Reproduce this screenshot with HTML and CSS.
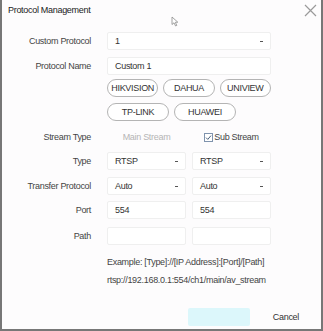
FILE: index.html
```html
<!DOCTYPE html>
<html lang="en">
<head>
    <meta charset="utf-8" />
    <link rel="stylesheet" href="styles.css">
    <title>Protocol Management</title>
</head>
<body>
    <div class="dialog">
        <div class="header">
            <span class="title">Protocol Management</span>
            <svg class="closebut" width="13" height="13" viewBox="0 0 13 13">
                <path d="M1 1 L12 12 M12 1 L1 12" stroke="#9a9a9a" stroke-width="1.2" fill="none" />
            </svg>
        </div>
        <svg class="pointer" width="8" height="11" viewBox="0 0 8 11">
            <path d="M1 1 L1 8.5 L3 6.8 L4.6 10 L5.8 9.4 L4.3 6.3 L6.8 6.2 Z" fill="#fff" stroke="#8a8a8a" stroke-width="0.8" />
        </svg>

        <div class="form">
            <div class="row r1">
                <span class="lbl">Custom Protocol</span>
                <div class="ctrl sel wide">1</div>
            </div>
            <div class="row r2">
                <span class="lbl">Protocol Name</span>
                <div class="ctrl wide">Custom 1</div>
            </div>
            <div class="row r3">
                <span class="lbl"></span>
                <div class="pills">
                    <button class="pill">HIKVISION</button>
                    <button class="pill">DAHUA</button>
                    <button class="pill">UNIVIEW</button>
                </div>
            </div>
            <div class="row r4">
                <span class="lbl"></span>
                <div class="pills">
                    <button class="pill">TP-LINK</button>
                    <button class="pill">HUAWEI</button>
                </div>
            </div>
            <div class="row r5 short">
                <span class="lbl">Stream Type</span>
                <div class="pair">
                    <span class="stream off">Main Stream</span>
                    <span class="stream">
                        <svg class="check" width="9" height="9" viewBox="0 0 9 9">
                            <rect x="0.5" y="0.5" width="8" height="8" fill="#fff" stroke="#7f93ad" />
                            <path d="M2 4.6 L3.8 6.4 L7 2.6" stroke="#4a5f7a" stroke-width="1" fill="none" />
                        </svg>Sub Stream
                    </span>
                </div>
            </div>
            <div class="row r6">
                <span class="lbl">Type</span>
                <div class="pair">
                    <div class="ctrl sel">RTSP</div>
                    <div class="ctrl sel">RTSP</div>
                </div>
            </div>
            <div class="row r7">
                <span class="lbl">Transfer Protocol</span>
                <div class="pair">
                    <div class="ctrl sel">Auto</div>
                    <div class="ctrl sel">Auto</div>
                </div>
            </div>
            <div class="row r8">
                <span class="lbl">Port</span>
                <div class="pair">
                    <div class="ctrl">554</div>
                    <div class="ctrl">554</div>
                </div>
            </div>
            <div class="row r9">
                <span class="lbl">Path</span>
                <div class="pair">
                    <div class="ctrl"></div>
                    <div class="ctrl"></div>
                </div>
            </div>
            <div class="row r10 short">
                <span class="lbl"></span>
                <span class="note">Example: [Type]://[IP Address]:[Port]/[Path]</span>
            </div>
            <div class="row r11 short">
                <span class="lbl"></span>
                <span class="note">rtsp://192.168.0.1:554/ch1/main/av_stream</span>
            </div>
        </div>

        <div class="footer">
            <button class="okbut">OK</button>
            <button class="cancelbut">Cancel</button>
        </div>
    </div>
</body>
</html>
```

FILE: styles.css
```css
body {
    margin: 0;
    font-family: "Liberation Sans", Arial, sans-serif;
    font-size: 9px;
    letter-spacing: -0.3px;
    color: #333;
}
.dialog {
    position: relative;
    width: 323px;
    height: 331px;
    box-sizing: border-box;
    background-color: #fdfcfd;
    border-left: 2px solid #777;
    border-right: 2px solid #777;
    border-bottom: 2px solid #777;
}
.header {
    display: flex;
    justify-content: space-between;
    align-items: center;
    height: 20px;
    padding-left: 6px;
    padding-right: 4px;
}
.title {
    color: #222;
}
.closebut {
    margin-top: 1px;
}
.pointer {
    position: absolute;
    left: 169px;
    top: 16px;
}
.form {
    display: flex;
    flex-direction: column;
    padding-top: 12px;
}
.row {
    display: grid;
    grid-template-columns: 89px 164px;
    column-gap: 16px;
    align-items: center;
    height: 18px;
}
.row.short {
    height: 14px;
}
.r2 { margin-top: 7px; }
.r3 { margin-top: 4px; }
.r4 { margin-top: 6px; }
.r5 { margin-top: 9px; }
.r6 { margin-top: 8px; }
.r7 { margin-top: 7px; }
.r8 { margin-top: 6px; }
.r9 { margin-top: 8px; }
.r10 { margin-top: 10px; }
.r11 { margin-top: 4px; }
.lbl {
    text-align: right;
    color: #444;
}
.ctrl {
    position: relative;
    height: 18px;
    box-sizing: border-box;
    border: 1px solid #efefef;
    border-radius: 2px;
    background-color: #fff;
    padding-left: 7px;
    line-height: 16px;
    color: #333;
}
.sel:after {
    content: "";
    position: absolute;
    right: 7px;
    top: 8px;
    width: 3px;
    height: 1px;
    background-color: #555;
}
.pair {
    display: grid;
    grid-template-columns: 79px 79px;
    column-gap: 6px;
    align-items: center;
}
.pills {
    display: flex;
    gap: 5px;
}
.pill {
    width: 62px;
    height: 18px;
    padding: 0;
    border: 1px solid #b4b4b4;
    border-radius: 9px;
    background-color: #fff;
    font-family: inherit;
    font-size: 9px;
    letter-spacing: -0.3px;
    color: #333;
}
.stream {
    display: flex;
    align-items: center;
    justify-content: center;
    color: #444;
}
.stream.off {
    color: #b5b5b5;
}
.check {
    margin-right: 1px;
}
.note {
    color: #444;
    white-space: nowrap;
}
.footer {
    display: flex;
    justify-content: flex-end;
    align-items: center;
    gap: 23px;
    margin-top: 21px;
    padding-right: 22px;
}
.okbut {
    width: 62px;
    height: 18px;
    border: none;
    border-radius: 2px;
    background-color: #dcf7fb;
    color: #dcf7fb;
    font-family: inherit;
    font-size: 9px;
}
.cancelbut {
    border: none;
    padding: 0;
    background: none;
    font-family: inherit;
    font-size: 9px;
    letter-spacing: -0.3px;
    color: #333;
}
```
